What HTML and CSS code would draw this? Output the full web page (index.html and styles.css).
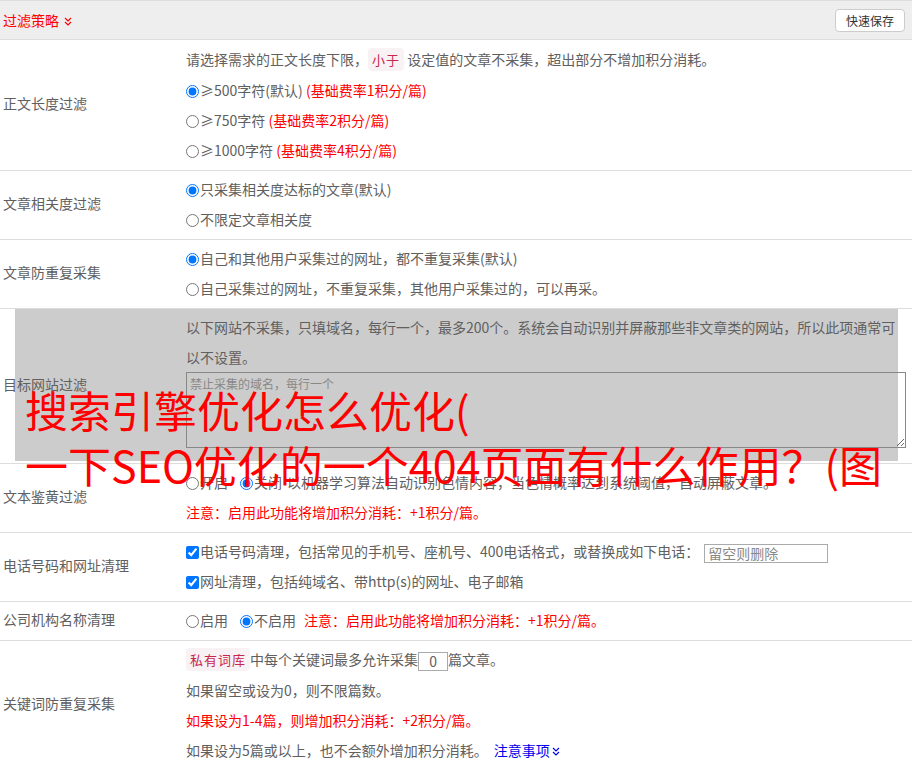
FILE: index.html
```html
<!DOCTYPE html>
<html lang="zh-CN">
<head>
    <meta charset="UTF-8">
    <meta name="viewport" content="width=device-width, initial-scale=1.0">
    <title>过滤策略</title>
    <link rel="stylesheet" href="styles.css">
</head>
<body>
    <div class="panel">
        <div class="panel-head">
            <span class="head-title">过滤策略
                <svg class="chev" width="8" height="9" viewBox="0 0 8 9"><path d="M1 1 L4 4 L7 1 M1 5 L4 8 L7 5" fill="none" stroke="#f00" stroke-width="1.2"/></svg>
            </span>
            <button class="btn-save">快速保存</button>
        </div>

        <div class="row first">
            <div class="label">正文长度过滤</div>
            <div class="field">
                <div class="line">请选择需求的正文长度下限，<code>小于</code> 设定值的文章不采集，超出部分不增加积分消耗。</div>
                <div class="line"><label><input type="radio" name="len" checked>≥500字符(默认) <span class="red">(基础费率1积分/篇)</span></label></div>
                <div class="line"><label><input type="radio" name="len">≥750字符 <span class="red">(基础费率2积分/篇)</span></label></div>
                <div class="line"><label><input type="radio" name="len">≥1000字符 <span class="red">(基础费率4积分/篇)</span></label></div>
            </div>
        </div>

        <div class="row">
            <div class="label">文章相关度过滤</div>
            <div class="field">
                <div class="line"><label><input type="radio" name="rel" checked>只采集相关度达标的文章(默认)</label></div>
                <div class="line"><label><input type="radio" name="rel">不限定文章相关度</label></div>
            </div>
        </div>

        <div class="row">
            <div class="label">文章防重复采集</div>
            <div class="field">
                <div class="line"><label><input type="radio" name="dup" checked>自己和其他用户采集过的网址，都不重复采集(默认)</label></div>
                <div class="line"><label><input type="radio" name="dup">自己采集过的网址，不重复采集，其他用户采集过的，可以再采。</label></div>
            </div>
        </div>

        <div class="row">
            <div class="label">目标网站过滤</div>
            <div class="field">
                <div class="line">以下网站不采集，只填域名，每行一个，最多200个。系统会自动识别并屏蔽那些非文章类的网站，所以此项通常可以不设置。</div>
                <textarea class="domains" placeholder="禁止采集的域名，每行一个"></textarea>
            </div>
        </div>

        <div class="row">
            <div class="label">文本鉴黄过滤</div>
            <div class="field">
                <div class="line"><label class="opt"><input type="radio" name="porn">开启</label><label><input type="radio" name="porn" checked>关闭</label><span class="desc">以机器学习算法自动识别色情内容，当色情概率达到系统阈值，自动屏蔽文章。</span></div>
                <div class="line red">注意：启用此功能将增加积分消耗：+1积分/篇。</div>
            </div>
        </div>

        <div class="row">
            <div class="label">电话号码和网址清理</div>
            <div class="field">
                <div class="line"><label><input type="checkbox" checked>电话号码清理，包括常见的手机号、座机号、400电话格式，或替换成如下电话：</label><input class="phone" type="text" placeholder="留空则删除"></div>
                <div class="line"><label><input type="checkbox" checked>网址清理，包括纯域名、带http(s)的网址、电子邮箱</label></div>
            </div>
        </div>

        <div class="row">
            <div class="label">公司机构名称清理</div>
            <div class="field">
                <div class="line"><label class="opt"><input type="radio" name="org">启用</label><label><input type="radio" name="org" checked>不启用</label><span class="note red">注意：启用此功能将增加积分消耗：+1积分/篇。</span></div>
            </div>
        </div>

        <div class="row">
            <div class="label">关键词防重复采集</div>
            <div class="field">
                <div class="line"><code>私有词库</code>中每个关键词最多允许采集<input class="num" type="text" value="0">篇文章。</div>
                <div class="line">如果留空或设为0，则不限篇数。</div>
                <div class="line red">如果设为1-4篇，则增加积分消耗：+2积分/篇。</div>
                <div class="line">如果设为5篇或以上，也不会额外增加积分消耗。<a class="tips" href="#">注意事项<svg class="chev" width="8" height="9" viewBox="0 0 8 9"><path d="M1 1 L4 4 L7 1 M1 5 L4 8 L7 5" fill="none" stroke="#00e" stroke-width="1.2"/></svg></a></div>
            </div>
        </div>
    </div>

    <div class="cover"></div>
    <div class="cover-title">搜索引擎优化怎么优化(<br>一下SEO优化的一个404页面有什么作用？(图</div>
</body>
</html>
```

FILE: styles.css
```css
html {
    background-color: #fff;
}
html, body {
    margin: 0;
    padding: 0;
    overflow: hidden;
}
body {
    position: relative;
    font-family: "Noto Sans CJK SC", "Liberation Sans", sans-serif;
    font-size: 14px;
    color: #606060;
}
.panel-head {
    display: flex;
    justify-content: space-between;
    align-items: center;
    height: 38px;
    padding: 0 7px 0 3px;
    background-color: #eee;
    border-top: 1px solid #ddd;
    border-bottom: 1px solid #ddd;
}
.head-title {
    color: #f00;
}
.chev {
    margin-left: 2px;
    vertical-align: 0;
}
.btn-save {
    height: 23px;
    padding: 0 10px;
    background-color: #fff;
    border: 1px solid #ccc;
    border-radius: 4px;
    font-family: inherit;
    font-size: 12px;
    color: #333;
    cursor: pointer;
}
.row {
    display: flex;
    align-items: center;
    padding: 3px 0 5px;
    border-bottom: 1px solid #ddd;
}
.row.first {
    padding-top: 4px;
}
.label {
    width: 183px;
    padding-left: 3px;
    padding-bottom: 3px;
    flex-shrink: 0;
}
.field {
    flex: 1;
    padding-right: 6px;
    min-width: 0;
}
.line {
    line-height: 30px;
}
.red {
    color: #f00;
}
code {
    padding: 2px 4px;
    background-color: #f9f2f4;
    border-radius: 4px;
    color: #c7254e;
    font-family: inherit;
    font-size: 13px;
    letter-spacing: 1px;
}
input[type="radio"], input[type="checkbox"] {
    width: 13px;
    height: 13px;
    margin: 0 1px 0 0;
    vertical-align: -2px;
}
.opt {
    margin-right: 12px;
}
.desc {
    margin-left: 5px;
}
.note {
    margin-left: 8px;
}
.phone {
    width: 124px;
    height: 19px;
    box-sizing: border-box;
    margin-left: 5px;
    padding: 0 3px;
    border: 1px solid #aaa;
    font-family: inherit;
    font-size: 14px;
    vertical-align: middle;
}
.phone::placeholder {
    color: #888;
}
.num {
    width: 30px;
    height: 19px;
    box-sizing: border-box;
    padding: 0;
    border: 1px solid #aaa;
    text-align: center;
    font-family: inherit;
    font-size: 14px;
    color: #606060;
    vertical-align: middle;
}
.domains {
    display: block;
    box-sizing: border-box;
    width: 100%;
    height: 76px;
    margin-bottom: 10px;
    padding: 2px 3px;
    background: transparent;
    border: 1px solid #888;
    font-family: inherit;
    font-size: 12px;
}
.domains::placeholder {
    color: #888;
}
.tips {
    margin-left: 6px;
    color: #00e;
    text-decoration: none;
}
.cover {
    position: absolute;
    left: 15px;
    top: 308px;
    width: 883px;
    height: 153px;
    background-color: #ccc;
    z-index: -1;
}
.cover-title {
    position: absolute;
    left: 25px;
    top: 382px;
    font-size: 43px;
    line-height: 55px;
    color: #f00;
    white-space: nowrap;
    z-index: 2;
}
```
